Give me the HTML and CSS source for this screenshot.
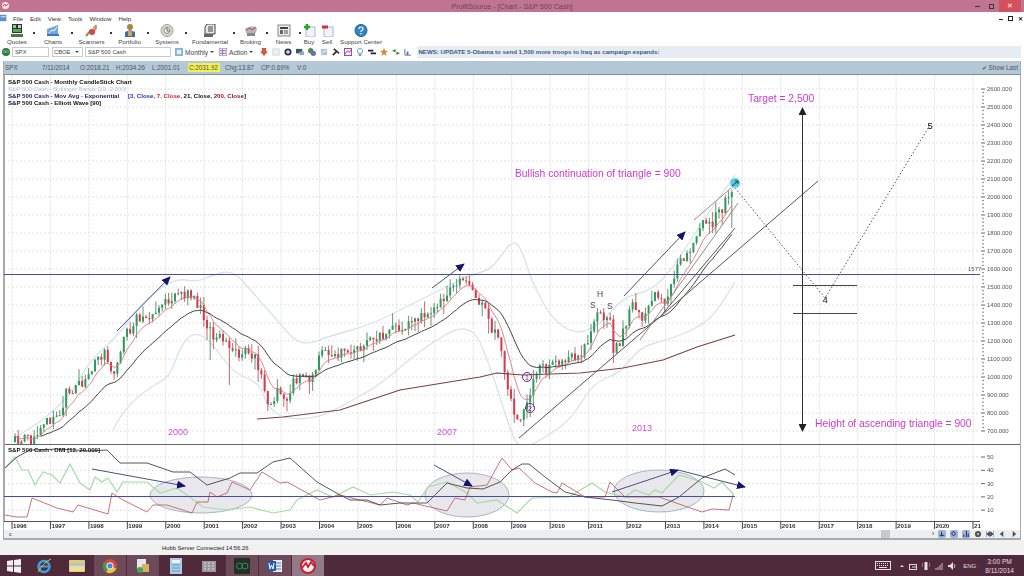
FILE: index.html
```html
<!DOCTYPE html>
<html lang="en">
<head>
    <meta charset="UTF-8">
    <title>ProfitSource - [Chart - S&amp;P 500 Cash]</title>
    <link rel="stylesheet" href="styles.css">
</head>
<body>
    <!-- Title Bar -->
    <div class="title-bar">
        <svg class="app-icon" viewBox="0 0 10 10"><circle cx="5" cy="5" r="4" fill="#f4e4e8"/><path d="M2 6L4 3.500L5.500 5.500L8 3" stroke="#c02030" fill="none"/></svg>
        <span class="title-text">ProfitSource - [Chart - S&amp;P 500 Cash]</span>
        <div class="win-buttons">
            <span class="win-min"></span>
            <span class="win-max"></span>
            <span class="win-close">✕</span>
        </div>
    </div>

    <!-- Menu -->
    <div class="menu-bar">
        <svg class="menu-icon" viewBox="0 0 10 10"><rect x="0" y="1" width="8" height="8" fill="#5b8fd0"/><rect x="1" y="3" width="6" height="1" fill="#fff"/></svg>
        <span>File</span>
        <span>Edit</span>
        <span>View</span>
        <span>Tools</span>
        <span>Window</span>
        <span>Help</span>
        <div class="mdi-buttons">
            <span class="mdi-min"></span>
            <span class="mdi-max"></span>
            <span class="mdi-close">✕</span>
        </div>
    </div>

    <!-- Main Toolbar -->
    <div class="tool-bar">
        <div class="tool has-menu">
            <svg viewBox="0 0 14 13"><rect x="2" y="0" width="10" height="9" fill="#333"/><rect x="3" y="1" width="3" height="3" fill="#8c8"/><rect x="8" y="1" width="3" height="3" fill="#ccc"/><rect x="3" y="5" width="8" height="3" fill="#5a5"/><rect x="1" y="10" width="12" height="3" fill="#4a7a40"/></svg>
            <span>Quotes</span>
        </div>
        <div class="tool has-menu">
            <svg viewBox="0 0 14 13"><path d="M1 5L12 1V11L1 12Z" fill="#6fa8dc"/><path d="M3 9L6 6L8 7L11 3" stroke="#fff" fill="none"/><rect x="1" y="10" width="12" height="2" fill="#3d7ab8"/></svg>
            <span>Charts</span>
        </div>
        <div class="tool has-menu">
            <svg viewBox="0 0 14 13"><path d="M1 12L6 6L9 8L11 1" stroke="#7a9a50" stroke-width="2" fill="none"/><circle cx="7" cy="8" r="3" fill="#d04848"/><circle cx="10" cy="4" r="2" fill="#e08a70"/></svg>
            <span>Scanners</span>
        </div>
        <div class="tool has-menu">
            <svg viewBox="0 0 14 13"><circle cx="7" cy="3" r="3" fill="#b08040"/><path d="M2 13V8L7 6L12 8V13Z" fill="#4a6a9a"/><rect x="5" y="7" width="4" height="5" fill="#c8a860"/></svg>
            <span>Portfolio</span>
        </div>
        <div class="tool has-menu">
            <svg viewBox="0 0 14 13"><circle cx="7" cy="6.500" r="6" fill="#d8d8d0" stroke="#a0a098"/><circle cx="7" cy="6.500" r="3" fill="#f0f0ec" stroke="#909088"/><path d="M7 3V7H10" stroke="#707068" fill="none"/></svg>
            <span>Systems</span>
        </div>
        <div class="tool has-menu">
            <svg viewBox="0 0 14 13"><path d="M4 0H12V10H2V3Z" fill="#e8e8e8" stroke="#444"/><path d="M5 3H10M5 5H10M5 7H10" stroke="#444"/><rect x="1" y="10" width="9" height="3" fill="#666"/></svg>
            <span>Fundamental</span>
        </div>
        <div class="tool has-menu">
            <svg viewBox="0 0 14 13"><path d="M1 5Q7 0 13 4L12 9H2Z" fill="#b0b8b8"/><path d="M2 6L6 4L8 6L12 3" stroke="#c83850" fill="none"/><rect x="3" y="9" width="8" height="3" fill="#808888"/></svg>
            <span>Broking</span>
        </div>
        <div class="tool has-menu">
            <svg viewBox="0 0 14 13"><rect x="1" y="1" width="12" height="11" fill="#ececec" stroke="#888"/><rect x="3" y="3" width="8" height="2" fill="#444"/><rect x="3" y="6" width="3" height="4" fill="#666"/><path d="M7 7H11M7 9H11" stroke="#555"/></svg>
            <span>News</span>
        </div>
        <div class="tool">
            <svg viewBox="0 0 14 13"><rect x="4" y="3" width="9" height="10" fill="#eef4fa" stroke="#a8b8c8"/><path d="M5 0V6M2 3H8" stroke="#30a030" stroke-width="2.500"/></svg>
            <span>Buy</span>
        </div>
        <div class="tool">
            <svg viewBox="0 0 14 13"><rect x="4" y="3" width="9" height="10" fill="#eef4fa" stroke="#a8b8c8"/><path d="M2 3H8" stroke="#d03030" stroke-width="3"/></svg>
            <span>Sell</span>
        </div>
        <div class="tool">
            <svg viewBox="0 0 14 13"><circle cx="7" cy="6.500" r="6" fill="#2f86c0" stroke="#1a5f90"/><path d="M5 5Q5 3 7 3T9 5Q9 6 7 7V8M7 9V10.500" stroke="#fff" fill="none" stroke-width="1.200"/></svg>
            <span>Support Center</span>
        </div>
    </div>

    <!-- Symbol Row -->
    <div class="symbol-bar">
        <span class="go-button">GO</span>
        <span class="field field-symbol">SPX</span>
        <span class="field field-market">CBOE<i class="caret"></i></span>
        <span class="field field-name">S&amp;P 500 Cash</span>
        <svg class="sym-icon" viewBox="0 0 9 9"><rect x="0" y="0" width="9" height="9" fill="#7fb4d8"/><rect x="2" y="2" width="5" height="5" fill="#e4f0f8"/></svg>
        <span class="sym-label">Monthly</span><i class="caret"></i>
        <svg class="sym-icon" viewBox="0 0 9 9"><rect x="0" y="0" width="9" height="9" fill="#f0e8f4" stroke="#8a70a8"/><path d="M1 3H8M1 6H8M4 1V8" stroke="#8a70a8"/></svg>
        <span class="sym-label">Action</span><i class="caret"></i>
        <div class="sym-icons">
            <svg viewBox="0 0 9 9"><path d="M2 0H7V4H9L4.500 9L0 4H2Z" fill="#d05a48"/></svg>
            <svg viewBox="0 0 9 9"><rect x="1" y="1" width="7" height="7" fill="#eef0f2" stroke="#d0d4d8"/></svg>
            <svg viewBox="0 0 9 9"><circle cx="4.500" cy="4.500" r="3" fill="#dde" stroke="#335" stroke-width="2"/></svg>
            <svg viewBox="0 0 9 9"><rect x="0" y="1" width="7" height="5" fill="#356"/><rect x="4" y="4" width="5" height="4" fill="#8ab"/></svg>
            <svg viewBox="0 0 9 9"><circle cx="3" cy="3" r="3" fill="#4a8a50"/><circle cx="6" cy="6" r="3" fill="#6a70b0"/></svg>
            <svg viewBox="0 0 9 9"><rect x="1" y="1" width="7" height="7" fill="#b0c4d8"/><path d="M2 6L4 4L7 3" stroke="#fff" fill="none"/></svg>
            <svg viewBox="0 0 9 9"><path d="M1 8L6 3M2 1L8 6" stroke="#333" stroke-width="2"/></svg>
            <svg viewBox="0 0 9 9"><rect x="0.500" y="0.500" width="8" height="8" fill="#eef" stroke="#74a"/><path d="M1 7L4 3L6 5L8 2" stroke="#c33" fill="none"/></svg>
            <svg viewBox="0 0 9 9"><circle cx="4.500" cy="3.500" r="3" fill="#fff" stroke="#5a9ac8"/><rect x="3" y="7" width="3" height="2" fill="#5a9ac8"/></svg>
            <svg viewBox="0 0 9 9"><path d="M0 2H6V4H0ZM3 5H9V7H3Z" fill="#223"/></svg>
            <svg viewBox="0 0 9 9"><path d="M4.500 0L6 3L9 3.500L6.500 5.500L7.500 9L4.500 7L1.500 9L2.500 5.500L0 3.500L3 3Z" fill="#d09030"/></svg>
            <svg viewBox="0 0 9 9"><path d="M0 3L4 1V5ZM9 6L5 4V8Z" fill="#4a7a48"/></svg>
            <svg viewBox="0 0 9 9"><path d="M1 1V8H8" stroke="#4a70a0" fill="none"/><rect x="3" y="4" width="2" height="4" fill="#4a70a0"/></svg>
        </div>
        <div class="news-ticker">NEWS: UPDATE 5-Obama to send 1,500 more troops to Iraq as campaign expands:</div>
    </div>

    <!-- Chart Window -->
    <div class="chart-window">
        <div class="info-bar">
            <span class="info-symbol">SPX</span>
            <span class="info-date">7/11/2014</span>
            <span class="info-item">O:2018.21</span>
            <span class="info-item">H:2034.26</span>
            <span class="info-item">L:2001.01</span>
            <span class="info-close">C:2031.92</span>
            <span class="info-item">Chg:13.87</span>
            <span class="info-item">CP:0.69%</span>
            <span class="info-item">V:0</span>
            <span class="show-last">✔ Show Last</span>
        </div>

        <svg id="chart" class="chart-svg" viewBox="4 75 1016 455">
            <defs>
                <marker id="head" markerUnits="userSpaceOnUse" markerWidth="9" markerHeight="8" refX="8" refY="4" orient="auto"><path d="M0 0L9 4L0 8Z" fill="#14146e"/></marker>
                <marker id="tip" markerUnits="userSpaceOnUse" markerWidth="8" markerHeight="8" refX="7" refY="4" orient="auto-start-reverse"><path d="M0 0L8 4L0 8Z" fill="#222"/></marker>
                <clipPath id="main-pane"><rect x="4" y="75" width="976" height="369"/></clipPath>
                <clipPath id="dmi-pane"><rect x="4" y="445" width="976" height="76"/></clipPath>
            </defs>

            <g id="grid"></g>
            <g id="dmi-ellipses">
                <ellipse cx="201" cy="495" rx="51" ry="18" class="oval"/>
                <ellipse cx="467" cy="495" rx="42" ry="22" class="oval"/>
                <ellipse cx="659" cy="491" rx="45" ry="21" class="oval"/>
            </g>
            <g id="bands" clip-path="url(#main-pane)"></g>
            <g id="candles" clip-path="url(#main-pane)"></g>
            <g id="averages" clip-path="url(#main-pane)"></g>
            <g id="dmi-lines" clip-path="url(#dmi-pane)"></g>
            <g id="axes"></g>

            <!-- drawn on the chart by hand -->
            <line x1="4" y1="274.500" x2="980" y2="274.500" class="level"/>
            <line x1="4" y1="496.500" x2="735" y2="496.500" class="level"/>
            <text x="968" y="271" class="axis-label">1577</text>

            <line x1="117" y1="331" x2="170" y2="277" class="trend-arrow"/>
            <line x1="432" y1="288" x2="464" y2="264" class="trend-arrow"/>
            <line x1="624" y1="296" x2="685" y2="232" class="trend-arrow"/>
            <line x1="694" y1="220" x2="731" y2="188" class="trend-soft"/>
            <line x1="519" y1="438" x2="818" y2="181" class="trend"/>
            <line x1="660" y1="317" x2="735" y2="228" class="trend"/>
            <line x1="640" y1="340" x2="738" y2="203" class="trend-soft"/>
            <polyline points="735,188 825,298 930,125" class="dotted"/>
            <line x1="802.500" y1="108" x2="802.500" y2="431" class="height-arrow"/>
            <line x1="793" y1="285.500" x2="857" y2="285.500" class="box-line"/>
            <line x1="793" y1="313.500" x2="857" y2="313.500" class="box-line"/>

            <line x1="92" y1="469" x2="185" y2="486" class="trend-arrow"/>
            <line x1="434" y1="465" x2="472" y2="486" class="trend-arrow"/>
            <line x1="612" y1="492" x2="678" y2="470" class="trend-arrow"/>
            <line x1="678" y1="470" x2="745" y2="487" class="trend-arrow"/>

            <circle cx="735" cy="183" r="5" class="last-dot"/>
            <path d="M732 186L738 181M735 181H738V184" class="last-mark"/>

            <text x="748" y="102" class="note">Target = 2,500</text>
            <text x="515" y="177" class="note">Bullish continuation of triangle = 900</text>
            <text x="815" y="427" class="note">Height of ascending triangle = 900</text>
            <text x="168" y="435" class="year-note">2000</text>
            <text x="437" y="435" class="year-note">2007</text>
            <text x="632" y="431" class="year-note">2013</text>

            <text x="597" y="297" class="pattern">H</text>
            <text x="590" y="308" class="pattern">S</text>
            <text x="607" y="309" class="pattern">S</text>
            <text x="822.500" y="303" class="wave">4</text>
            <text x="927.500" y="129" class="wave">5</text>
            <circle cx="527" cy="377" r="4.500" class="wave-ring"/>
            <text x="525" y="380" class="wave-num">1</text>
            <circle cx="530" cy="408" r="4.500" class="wave-ring"/>
            <text x="528" y="411" class="wave-num">2</text>

            <text x="8" y="84" class="legend">S&amp;P 500 Cash - Monthly CandleStick Chart</text>
            <text x="8" y="91" class="legend legend-faint">S&amp;P 500 Cash - Bollinger Bands [20, 2.000]</text>
            <text x="8" y="98" class="legend legend-navy">S&amp;P 500 Cash - Mov Avg - Exponential
                <tspan x="128" class="leg-blue">[3, Close,</tspan>
                <tspan class="leg-red">7, Close,</tspan>
                <tspan class="leg-black">21, Close,</tspan>
                <tspan class="leg-dark">200, Close</tspan><tspan class="leg-black">]</tspan>
            </text>
            <text x="8" y="105" class="legend">S&amp;P 500 Cash - Elliott Wave [90]</text>
            <text x="8" y="452" class="legend">S&amp;P 500 Cash - DMI [13, 20.000]</text>
        </svg>

        <div class="scroll-bar">
            <span class="scroll-c">c</span>
            <span class="scroll-thumb"></span>
            <div class="scroll-tools">
                <span class="nav-tri">›</span>
                <svg viewBox="0 0 9 9"><rect width="9" height="9" rx="2" fill="#9ab4dc"/><path d="M2 6H7M4 2V7" stroke="#224"/></svg>
                <svg viewBox="0 0 9 9"><rect width="9" height="9" rx="2" fill="#9ab4dc"/><circle cx="4" cy="4" r="2" fill="none" stroke="#224"/></svg>
                <svg viewBox="0 0 9 9"><rect width="9" height="9" rx="2" fill="#9ab4dc"/><path d="M2 8V5M5 8V1M7 8V4" stroke="#224"/></svg>
                <svg viewBox="0 0 9 9"><circle cx="4.500" cy="4.500" r="3.500" fill="#555"/><circle cx="4.500" cy="4.500" r="1.200" fill="#ccc"/></svg>
                <svg viewBox="0 0 9 9"><path d="M0 1V8M9 1V8M1 4.500L4 2V7ZM8 4.500L5 2V7Z" stroke="#456" fill="#456"/></svg>
                <svg viewBox="0 0 9 9"><path d="M6 1V8L2 4.500Z" fill="#456"/></svg>
                <svg viewBox="0 0 9 9"><path d="M3 1V8L7 4.500Z" fill="#456"/></svg>
            </div>
        </div>
    </div>

    <!-- Status -->
    <div class="status-bar"><span>Hubb Server Connected 14:56:26</span></div>

    <!-- Taskbar -->
    <div class="taskbar">
        <div class="task-start">
            <svg viewBox="0 0 14 14"><path d="M0 2L6 1V6.500H0ZM7 1L14 0V6.500H7ZM0 7.500H6V13L0 12ZM7 7.500H14V14L7 13Z" fill="#f2f0f2"/></svg>
        </div>
        <div class="task-item">
            <svg viewBox="0 0 16 16"><circle cx="8" cy="8.500" r="5.500" fill="none" stroke="#3aa0e0" stroke-width="2.500"/><rect x="4" y="7.500" width="9" height="2" fill="#3aa0e0"/><path d="M2 14Q8 4 15 1" stroke="#e8c040" fill="none"/></svg>
        </div>
        <div class="task-item">
            <svg viewBox="0 0 16 16"><rect x="0" y="2" width="16" height="12" rx="1" fill="#e8c878"/><rect x="0" y="5" width="16" height="3" fill="#a8d0c0"/><rect x="1" y="8" width="14" height="5" fill="#f0dc9c"/></svg>
        </div>
        <div class="task-item task-open">
            <svg viewBox="0 0 16 16"><circle cx="8" cy="8" r="7" fill="#d8483c"/><path d="M8 8L14.500 10.500A7 7 0 0 1 4 14Z" fill="#f0c030"/><path d="M8 8L4 14A7 7 0 0 1 2 4Z" fill="#3c9c50"/><circle cx="8" cy="8" r="3.200" fill="#4a88e0" stroke="#fff"/></svg>
        </div>
        <div class="task-item task-open">
            <svg viewBox="0 0 16 16"><rect x="2" y="1" width="9" height="11" fill="#e0e8f0"/><rect x="7" y="6" width="7" height="8" fill="#d8b060"/><circle cx="5" cy="12" r="3" fill="#50a050"/></svg>
        </div>
        <div class="task-item">
            <svg viewBox="0 0 16 16"><rect x="2" y="0" width="12" height="16" fill="#a8cce8"/><rect x="4" y="2" width="8" height="3" fill="#eaf4fa"/><path d="M4 7H12M4 10H12M4 13H12" stroke="#6a9cc0"/></svg>
        </div>
        <div class="task-item">
            <svg viewBox="0 0 16 16"><rect x="1" y="3" width="14" height="11" fill="#9a9a9a"/><path d="M3 5H5M7 5H9M11 5H13M3 8H5M7 8H9M11 8H13M3 11H5M7 11H9M11 11H13" stroke="#e0e0e0"/></svg>
        </div>
        <div class="task-item task-open">
            <svg viewBox="0 0 16 16"><rect width="16" height="16" fill="#23302a"/><circle cx="5.500" cy="8" r="3" fill="none" stroke="#3c8a58"/><circle cx="11" cy="8" r="3" fill="none" stroke="#3c8a58"/></svg>
        </div>
        <div class="task-item task-open">
            <svg viewBox="0 0 16 16"><rect x="6" y="2" width="9" height="12" fill="#e8eef6"/><path d="M8 5H14M8 8H14M8 11H14" stroke="#4a7ab8"/><rect x="0" y="3" width="9" height="10" fill="#2a5ca8"/><path d="M2 5L3 11L4.500 7L6 11L7 5" stroke="#fff" fill="none"/></svg>
        </div>
        <div class="task-item task-active">
            <svg viewBox="0 0 16 16"><circle cx="8" cy="8" r="7" fill="#f4f0f0" stroke="#c82030" stroke-width="2"/><path d="M2 10L6 5L8 9L11 4L14 8" stroke="#c82030" stroke-width="1.800" fill="none"/></svg>
        </div>

        <div class="tray">
            <svg class="tray-keys" viewBox="0 0 16 9"><rect x="0.500" y="0.500" width="15" height="8" fill="none" stroke="#e8e0e4"/><path d="M2 2.500H14M2 4.500H14" stroke="#e8e0e4" stroke-dasharray="1 1"/><path d="M4 6.500H12" stroke="#e8e0e4"/></svg>
            <span class="tray-up"></span>
            <svg viewBox="0 0 8 8"><rect x="0.500" y="2.500" width="7" height="5" fill="none" stroke="#e0d8dc"/><path d="M3 5H8" stroke="#e0d8dc"/></svg>
            <svg viewBox="0 0 8 8"><rect x="2.500" y="0" width="3" height="8" fill="#e8e0e4"/><path d="M0 1V5M8 1V5" stroke="#c8c0c4"/></svg>
            <svg viewBox="0 0 8 8"><path d="M1 8V6M3 8V5M5 8V3M7 8V1" stroke="#c8c0c4"/></svg>
            <svg viewBox="0 0 8 8"><path d="M0 3H2L5 0V8L2 5H0Z" fill="#e8e0e4"/><path d="M6 2Q8 4 6 6" stroke="#c8c0c4" fill="none"/></svg>
            <span class="tray-lang">ENG</span>
            <div class="tray-clock">
                <span>3:00 PM</span>
                <span>8/11/2014</span>
            </div>
        </div>
    </div>

    <script src="chart.js"></script>
</body>
</html>
```

FILE: styles.css
```css
* {
    margin: 0;
    padding: 0;
    box-sizing: border-box;
}

body {
    font-family: "Liberation Sans", Arial, sans-serif;
    font-size: 6.2px;
    color: #333;
    background: #fff;
    width: 1024px;
    height: 576px;
    display: flex;
    flex-direction: column;
    overflow: hidden;
}

/* Title Bar */
.title-bar {
    height: 12px;
    background: #bf7490;
    display: flex;
    align-items: center;
    justify-content: center;
    position: relative;
}

.app-icon {
    position: absolute;
    left: 1px;
    top: 1px;
    width: 9px;
    height: 9px;
}

.title-text {
    font-size: 7.200px;
    color: #6f4658;
}

.win-buttons {
    position: absolute;
    right: 3px;
    top: 0;
    height: 12px;
    display: flex;
    align-items: center;
}

.win-min {
    width: 5px;
    height: 1px;
    background: #4a3038;
    margin-right: 9px;
}

.win-max {
    width: 5px;
    height: 5px;
    border: 1px solid #4a3038;
    margin-right: 5px;
}

.win-close {
    width: 22px;
    height: 12px;
    background: #d6505c;
    color: #fff;
    font-size: 7px;
    line-height: 12px;
    text-align: center;
}

/* Menu */
.menu-bar {
    height: 12px;
    display: flex;
    align-items: center;
    position: relative;
    padding-left: 13px;
}

.menu-icon {
    position: absolute;
    left: 0;
    top: 2px;
    width: 8px;
    height: 8px;
}

.menu-bar > span {
    margin-right: 7px;
}

.mdi-buttons {
    position: absolute;
    right: 1px;
    top: 0;
    height: 12px;
    display: flex;
    align-items: center;
    gap: 5px;
}

.mdi-min {
    width: 4px;
    height: 1px;
    margin-top: 3px;
    background: #222;
}

.mdi-max {
    width: 5px;
    height: 5px;
    border: 1px solid #222;
}

.mdi-close {
    font-size: 6px;
    font-weight: bold;
    color: #111;
}

/* Main Toolbar */
.tool-bar {
    height: 22px;
    display: grid;
    grid-template-columns: 34px 38px 39px 37px 38px 48px 33px 33px 18px 18px 50px;
    justify-content: start;
}

.tool {
    display: flex;
    flex-direction: column;
    align-items: center;
    position: relative;
    white-space: nowrap;
}

.tool svg {
    width: 14px;
    height: 13px;
    filter: blur(0.3px);
}

.tool span {
    font-size: 6.200px;
    line-height: 9px;
    color: #444;
}

.tool.has-menu::after {
    content: '';
    position: absolute;
    right: -1px;
    top: 8px;
    width: 2px;
    height: 2px;
    background: #333;
}

/* Symbol Row */
.symbol-bar {
    height: 12px;
    display: flex;
    align-items: center;
    padding-left: 2px;
}

.go-button {
    width: 8px;
    height: 8px;
    border-radius: 50%;
    background: #2c7a3c;
    color: #cfe8d0;
    font-size: 3.500px;
    line-height: 8px;
    text-align: center;
    margin-right: 2px;
}

.field {
    height: 10px;
    line-height: 9px;
    padding-left: 2px;
    border: 1px solid #c8ccd0;
    font-size: 5.800px;
    color: #444;
    position: relative;
}

.field-symbol {
    width: 37px;
    margin-right: 3px;
}

.field-market {
    width: 31px;
    margin-right: 2px;
    padding-left: 1px;
}

.field-market .caret {
    position: absolute;
    right: 3px;
    top: 3px;
    margin: 0;
}

.field-name {
    width: 86px;
    margin-right: 4px;
}

.caret {
    display: inline-block;
    width: 0;
    height: 0;
    border-left: 2px solid transparent;
    border-right: 2px solid transparent;
    border-top: 2px solid #444;
    margin: 0 5px 0 2px;
}

.sym-icon {
    width: 8px;
    height: 8px;
    margin-right: 2px;
}

.sym-label {
    font-size: 6.600px;
    color: #445;
}

.sym-icons {
    display: flex;
    align-items: center;
    gap: 4px;
    width: 157px;
    margin-left: 2px;
}

.sym-icons svg {
    width: 8px;
    height: 8px;
    filter: blur(0.3px);
}

.news-ticker {
    flex: 1;
    height: 12px;
    line-height: 12px;
    margin-right: 3px;
    padding-left: 1px;
    background: #e6ecf1;
    color: #3c5c7c;
    font-weight: bold;
    font-size: 6.150px;
}

/* Chart Window */
.chart-window {
    margin: 3px 3px 0 3px;
    height: 479px;
    border: solid #a4aaae;
    border-width: 0 1px 2px 1px;
    display: flex;
    flex-direction: column;
}

.info-bar {
    height: 14px;
    flex: none;
    background: #b5c8d7;
    border-bottom: 1px solid #7f8e9b;
    display: flex;
    align-items: center;
    padding-left: 1px;
    color: #4a5560;
    font-size: 6.300px;
}

.info-symbol {
    width: 37px;
}

.info-date {
    width: 38px;
}

.info-item {
    width: 36px;
}

.info-close {
    width: 32px;
    margin-right: 5px;
    padding-left: 1px;
    background: #f4f04c;
    line-height: 9px;
}

.show-last {
    margin-left: auto;
    margin-right: 2px;
}

.chart-svg {
    display: block;
    width: 1016px;
    height: 455px;
    flex: none;
    background: #fff;
    filter: blur(0.35px);
}

.scroll-bar {
    flex: 1;
    background: #eeeeee;
    display: flex;
    align-items: center;
    padding-left: 5px;
    font-size: 5.500px;
    position: relative;
}

.scroll-thumb {
    position: absolute;
    left: 877px;
    top: 0;
    width: 9px;
    height: 8px;
    background: #c8c8c8;
}

.scroll-tools {
    margin-left: auto;
    margin-right: 2px;
    display: flex;
    align-items: center;
    gap: 4px;
}

.scroll-tools svg {
    width: 8px;
    height: 8px;
}

.nav-tri {
    color: #345;
    font-size: 7px;
    line-height: 8px;
}

/* chart marks */
.oval {
    fill: #e8e8ec;
    stroke: #a8b4c8;
    stroke-width: 1;
}

.level {
    stroke: #4c4c98;
    stroke-width: 1;
}

.axis-label {
    font-size: 6px;
    fill: #555;
}

.axis-year {
    font-size: 6.200px;
    font-weight: bold;
    fill: #333;
}

.trend-arrow {
    stroke: #4a5080;
    stroke-width: 1;
    marker-end: url(#head);
}

.trend {
    stroke: #555;
    stroke-width: 1;
}

.trend-soft {
    stroke: #9a8a80;
    stroke-width: 1;
}

.dotted {
    fill: none;
    stroke: #555;
    stroke-width: 1;
    stroke-dasharray: 1.500 2;
}

.height-arrow {
    stroke: #333;
    stroke-width: 1;
    marker-start: url(#tip);
    marker-end: url(#tip);
}

.box-line {
    stroke: #444;
    stroke-width: 1;
}

.last-dot {
    fill: #58c8dc;
    stroke: #a0e4f0;
}

.last-mark {
    fill: none;
    stroke: #204060;
    stroke-width: 1;
}

.note {
    font-size: 10.300px;
    fill: #d038d0;
}

.year-note {
    font-size: 9px;
    fill: #d050d0;
}

.pattern {
    font-size: 8.500px;
    fill: #444;
}

.wave {
    font-size: 9.500px;
    fill: #111;
}

.wave-ring {
    fill: none;
    stroke: #701f80;
    stroke-width: 1;
}

.wave-num {
    font-size: 7px;
    fill: #701f80;
}

.legend {
    font-size: 6.100px;
    font-weight: bold;
    fill: #111;
}

.legend-faint {
    fill: #b4c4dc;
    font-weight: normal;
}

.legend-navy {
    fill: #1c1c60;
}

.leg-blue {
    fill: #2c2cb0;
}

.leg-red {
    fill: #d02030;
}

.leg-black {
    fill: #111;
}

.leg-dark {
    fill: #8c1820;
}

/* Status */
.status-bar {
    height: 15px;
    background: #f1f1f1;
    padding-left: 162px;
    line-height: 17px;
    font-size: 5.800px;
    color: #222;
}

/* Taskbar */
.taskbar {
    height: 21px;
    flex: none;
    background: #4f2a3a;
    display: flex;
    align-items: stretch;
    padding-left: 7px;
}

.task-start {
    width: 20px;
    margin-right: 1px;
    display: flex;
    align-items: center;
}

.task-start svg {
    width: 14px;
    height: 14px;
}

.task-item {
    width: 32px;
    margin-right: 1px;
    display: flex;
    align-items: center;
    justify-content: center;
}

.task-item svg {
    width: 16px;
    height: 16px;
    filter: blur(0.3px);
}

.task-open {
    background: #6c4a58;
}

.task-active {
    background: #937a86;
}

.tray {
    margin-left: auto;
    display: flex;
    align-items: center;
    gap: 5px;
    color: #e4dce0;
    padding-right: 10px;
}

.tray svg {
    width: 8px;
    height: 8px;
}

.tray .tray-keys {
    width: 16px;
    height: 9px;
    margin-right: 4px;
}

.tray-up {
    width: 0;
    height: 0;
    border-left: 2px solid transparent;
    border-right: 2px solid transparent;
    border-bottom: 2px solid #e4dce0;
}

.tray-lang {
    font-size: 6px;
    margin: 0 4px 0 2px;
}

.tray-clock {
    display: flex;
    flex-direction: column;
    align-items: center;
    font-size: 6.600px;
    line-height: 9px;
}
```

FILE: chart.js
```js
const NS = 'http://www.w3.org/2000/svg';

// Chart coordinates are page pixels (the svg viewBox starts at 4,75)
const yearX = yr => 12 + (yr - 1996) * 38.44;
const priceY = p => 89 + (2600 - p) * 0.18;

function add(parent, tag, attrs, text) {
    const el = document.createElementNS(NS, tag);
    for (const k in attrs) el.setAttribute(k, attrs[k]);
    if (text) el.textContent = text;
    document.getElementById(parent).appendChild(el);
    return el;
}

function line(parent, pts, color, width) {
    add(parent, 'polyline', {
        points: pts.map(p => p.join(',')).join(' '),
        fill: 'none',
        stroke: color,
        'stroke-width': width || 1
    });
}

// Curve through the midpoints, for the hand-read bands
function smooth(parent, pts, color, width) {
    let d = 'M' + pts[0].join(' ');
    for (let i = 1; i < pts.length - 1; i++) {
        const mx = (pts[i][0] + pts[i + 1][0]) / 2;
        const my = (pts[i][1] + pts[i + 1][1]) / 2;
        d += 'Q' + pts[i].join(' ') + ' ' + mx + ' ' + my;
    }
    d += 'L' + pts[pts.length - 1].join(' ');
    add(parent, 'path', { d: d, fill: 'none', stroke: color, 'stroke-width': width });
}

// Grid and axes
for (let p = 2600; p >= 700; p -= 100) {
    add('grid', 'line', { x1: 4, x2: 980, y1: priceY(p), y2: priceY(p), stroke: '#e0e0e0', 'stroke-dasharray': '2 2' });
    add('axes', 'line', { x1: 981, x2: 985, y1: priceY(p), y2: priceY(p), stroke: '#666' });
    add('axes', 'text', { x: 987, y: priceY(p) + 2, class: 'axis-label' }, p + '.000');
    for (let m = 1; m < 5 && p > 700; m++) {
        const y = priceY(p - m * 20);
        add('axes', 'line', { x1: 982, x2: 984, y1: y, y2: y, stroke: '#888' });
    }
}
for (let v = 50; v >= 10; v -= 10) {
    const y = 457 + (50 - v) * 1.33;
    add('grid', 'line', { x1: 4, x2: 980, y1: y, y2: y, stroke: '#e0e0e0', 'stroke-dasharray': '2 2' });
    add('axes', 'line', { x1: 981, x2: 985, y1: y, y2: y, stroke: '#666' });
    add('axes', 'text', { x: 987, y: y + 2, class: 'axis-label' }, String(v));
}
for (let yr = 1996; yr <= 2021; yr++) {
    const x = yearX(yr);
    add('grid', 'line', { x1: x, x2: x, y1: 75, y2: 521, stroke: '#e6e6e6', 'stroke-dasharray': '3 1' });
    add('axes', 'line', { x1: x, x2: x, y1: 521, y2: 529, stroke: '#444' });
    add('axes', 'text', { x: x + 1, y: 528, class: 'axis-year' }, yr === 2021 ? '21' : String(yr));
}
add('axes', 'line', { x1: 4, x2: 1020, y1: 444.5, y2: 444.5, stroke: '#666' });
add('axes', 'line', { x1: 4, x2: 980, y1: 521.5, y2: 521.5, stroke: '#555' });
add('axes', 'line', { x1: 4.5, x2: 4.5, y1: 75, y2: 521, stroke: '#aaa' });

// Monthly price path, read off as [x, y]
const path = [[15,442],[30,440],[40,432],[50,420],[60,415],[65,395],[72,388],[85,383],[95,365],[105,355],[110,358],[112,375],
    [118,365],[125,335],[135,322],[145,312],[155,320],[165,295],[172,300],[180,298],[190,293],[197,302],[205,320],[212,335],
    [220,330],[228,345],[235,355],[250,352],[258,365],[265,395],[270,405],[280,388],[287,400],[295,380],[310,378],[320,355],
    [330,355],[350,352],[370,342],[404,325],[443,300],[462,282],[470,280],[481,305],[500,345],[508,385],[515,415],[520,425],
    [530,390],[540,370],[560,365],[570,358],[580,355],[590,332],[600,312],[610,323],[613,348],[620,340],[632,305],[640,317],
    [650,310],[655,298],[662,302],[670,290],[680,262],[690,255],[700,225],[710,225],[720,212],[727,200],[735,193]];

function pathY(x) {
    for (let i = 1; i < path.length; i++) {
        if (x <= path[i][0]) {
            const a = path[i - 1], b = path[i];
            return a[1] + (b[1] - a[1]) * (x - a[0]) / (b[0] - a[0]);
        }
    }
    return path[path.length - 1][1];
}

let seed = 17;
function rnd() {
    seed = (seed * 16807) % 2147483647;
    return seed / 2147483647;
}

const closes = [];
let prev = 442;
for (let x = 15; x <= 735; x += 3.2) {
    const close = pathY(x) + (rnd() - 0.5) * 12;
    const top = Math.min(prev, close) - rnd() * rnd() * 14;
    let low = Math.max(prev, close) + rnd() * rnd() * 16;
    // the few long lower shadows on the reference
    if (Math.abs(x - 210) < 1.6) low = 360;
    if (Math.abs(x - 230) < 1.6) low = 385;
    if (Math.abs(x - 731) < 1.6) low = 228;
    if (Math.abs(x - 613) < 1.6) low = 363;
    const up = close < prev;
    const color = up ? '#2f9a5c' : '#d63a4c';
    add('candles', 'line', { x1: x, x2: x, y1: top, y2: low, stroke: up ? '#3c7a58' : '#b04a50', 'stroke-width': 0.8 });
    add('candles', 'rect', { x: x - 1, y: Math.min(prev, close), width: 2, height: Math.max(1, Math.abs(close - prev)), fill: color });
    closes.push([x, close]);
    prev = close;
}

function ema(n) {
    const k = 2 / (n + 1);
    let v = closes[0][1];
    return closes.map(c => {
        v = c[1] * k + v * (1 - k);
        return [c[0], v.toFixed(1)];
    });
}

line('averages', ema(7), '#d87c80', 0.9);
line('averages', ema(21).slice(8), '#444', 1);
line('averages', [[257,419],[283,417],[340,410],[400,390],[480,377],[497,373],[523,375],[580,373],[623,368],[663,360],[697,347],[735,335]], '#7a4048', 1.1);

// Bollinger bands
smooth('bands', [[15,438],[30,428],[43,420],[70,395],[90,360],[117,337],[140,305],[173,278],[197,282],[213,275],[233,270],[253,293],[277,320],[300,347],
    [330,336],[370,325],[410,305],[440,290],[470,275],[490,270],[500,257],[513,240],[522,250],[530,277],[550,317],[575,335],[600,325],[623,297],[653,290],[675,265],[700,225],[735,175]], '#d6e4ec', 1.3);
smooth('bands', [[113,430],[123,410],[150,387],[170,377],[180,347],[193,332],[210,340],[233,373],[260,383],[267,407],[287,420],[320,417],[340,407],[380,385],[420,350],[470,320],[490,365],
    [510,430],[520,450],[547,437],[573,417],[593,383],[620,373],[640,347],[667,340],[693,330],[713,317],[735,282]], '#d6e4ec', 1.3);

// DMI
const adx = [[5,468],[17,457],[30,450],[60,449],[90,451],[107,450],[120,463],[147,463],[173,472],[190,472],[207,485],[230,478],[240,473],[257,473],[273,462],[290,458],[317,482],[340,495],
    [350,500],[367,500],[380,505],[400,503],[427,503],[447,483],[467,488],[483,489],[500,482],[512,470],[522,464],[529,464],[545,477],[565,492],[585,497],[612,500],[635,503],[662,506],[679,497],[702,478],[725,469],[735,475]];
const plusDi = [[5,515],[17,517],[27,517],[32,498],[57,508],[73,512],[78,505],[108,514],[112,493],[123,500],[147,512],[153,505],[167,505],[192,513],[197,502],[208,502],[210,492],[217,497],[227,493],[232,482],
    [250,490],[262,472],[280,483],[287,482],[320,500],[340,495],[380,505],[387,498],[407,505],[413,503],[447,511],[455,498],[465,500],[470,487],[487,485],[502,458],[512,470],[519,468],[535,483],[552,492],[557,493],
    [562,483],[585,497],[605,497],[610,482],[625,497],[659,497],[702,512],[712,509],[729,510],[733,495]];
const minusDi = [[5,468],[15,457],[22,470],[28,470],[35,485],[43,472],[52,475],[60,483],[70,464],[80,483],[90,490],[95,477],[102,482],[108,478],[117,492],[123,482],[147,482],[160,493],[177,488],[190,497],[203,507],
    [227,510],[250,507],[273,513],[290,510],[297,500],[317,490],[333,497],[353,487],[370,495],[393,492],[410,495],[418,502],[428,487],[447,482],[467,493],[477,503],[497,500],[517,513],[532,498],[569,497],[592,483],
    [605,492],[625,497],[635,490],[649,495],[655,490],[662,493],[679,475],[702,482],[714,488],[722,482],[734,495]];
line('dmi-lines', minusDi, '#a4dca4', 1.2);
line('dmi-lines', plusDi, '#c4626c', 0.9);
line('dmi-lines', adx, '#444', 0.9);
```
